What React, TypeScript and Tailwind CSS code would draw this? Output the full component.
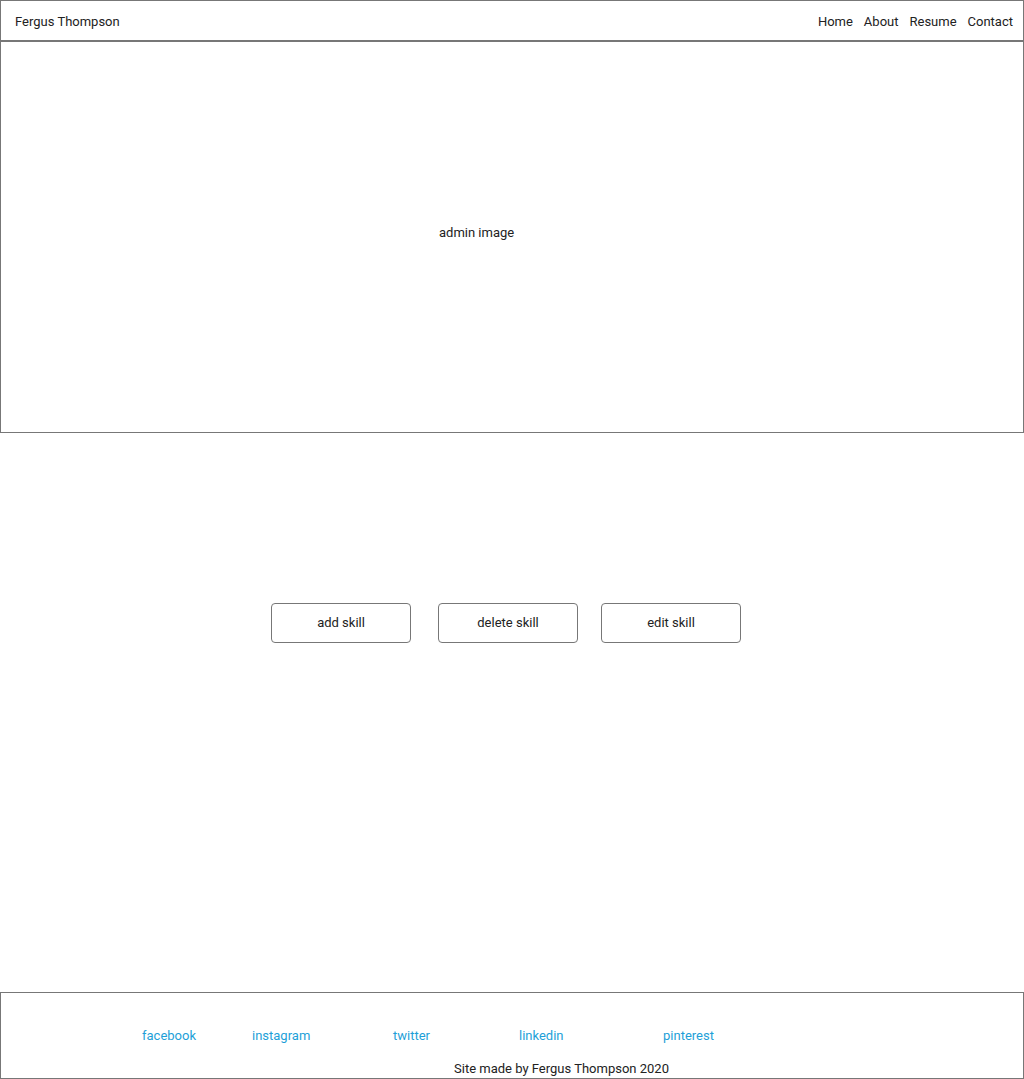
const links = [
  { label: "facebook", w: "w-[110px]" },
  { label: "instagram", w: "w-[141px]" },
  { label: "twitter", w: "w-[126px]" },
  { label: "linkedin", w: "w-[144px]" },
  { label: "pinterest", w: "w-auto" },
];

function SkillButton({ label }: { label: string }) {
  return (
    <button className="flex h-[40px] w-[140px] items-center justify-center rounded-[4px] border border-[#777] bg-white text-[13px] text-[#222]">
      {label}
    </button>
  );
}

export default function App() {
  return (
    <div className="flex h-[1079px] w-[1024px] flex-col bg-white font-['Roboto',sans-serif] text-[13px] text-[#222]">
      <header className="flex h-[42px] items-center justify-between border border-b-2 border-[#777] pl-[14px] pr-[10px] pt-[2px]">
        <span>Fergus Thompson</span>
        <nav className="flex gap-[11px]">
          <a href="#">Home</a>
          <a href="#">About</a>
          <a href="#">Resume</a>
          <a href="#">Contact</a>
        </nav>
      </header>

      <section className="flex h-[391px] items-center border-x border-b border-[#777] pb-[8px] pl-[438px]">
        <span>admin image</span>
      </section>

      <main className="flex flex-1 items-start pl-[271px] pt-[170px]">
        <div className="flex gap-[27px]">
          <SkillButton label="add skill" />
          <div className="flex gap-[23px]">
            <SkillButton label="delete skill" />
            <SkillButton label="edit skill" />
          </div>
        </div>
      </main>

      <footer className="flex h-[87px] flex-col border border-[#777]">
        <div className="flex pl-[141px] pt-[33px] text-[#1e9fd8]">
          {links.map((l) => (
            <a key={l.label} href="#" className={l.w}>
              {l.label}
            </a>
          ))}
        </div>
        <p className="mt-auto pl-[453px]">Site made by Fergus Thompson 2020</p>
      </footer>
    </div>
  );
}
